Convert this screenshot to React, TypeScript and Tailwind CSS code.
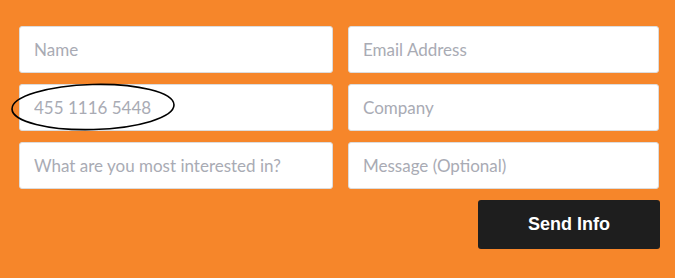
import React from "react";

const fields = [
  "Name",
  "Email Address",
  "455 1116 5448",
  "Company",
  "What are you most interested in?",
  "Message (Optional)",
];

export default function App() {
  return (
    <div className="relative h-[278px] w-[675px] bg-[#f6862a] pt-[26px] pl-[19px]">
      <form className="w-[641px]">
        <div className="grid grid-cols-[314px_311px] gap-x-[15px] gap-y-[11px]">
          {fields.map((f) => (
            <input
              key={f}
              placeholder={f}
              className="h-[47px] w-full rounded-[3px] border border-[#dcdcdc] bg-white px-[14px] text-[17px] text-[#555] placeholder:text-[#a9abb4] outline-none [font-family:Lato,'Noto_Sans',sans-serif]"
            />
          ))}
        </div>
        <div className="mt-[11px] flex justify-end">
          <button
            type="button"
            className="h-[49px] w-[182px] rounded-[3px] bg-[#1e1e1e] text-[18px] font-bold text-white [font-family:'Liberation_Sans',Arial,sans-serif]"
          >
            Send Info
          </button>
        </div>
      </form>
      <svg
        className="pointer-events-none absolute left-[11px] top-[82px]"
        width="166"
        height="50"
        viewBox="0 0 166 50"
      >
        <ellipse cx="82" cy="25" rx="81" ry="22.5" fill="none" stroke="#000" strokeWidth="1.6" transform="rotate(-1.5 82 25)" />
      </svg>
    </div>
  );
}
